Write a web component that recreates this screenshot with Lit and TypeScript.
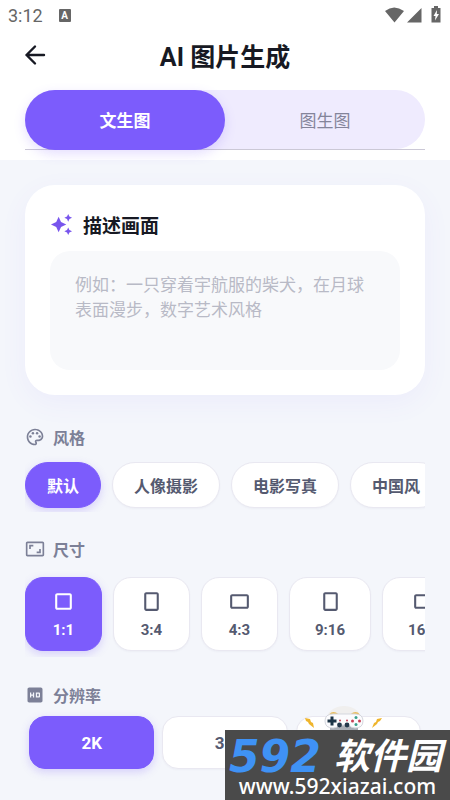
import { LitElement, html, css, svg } from "lit";
import { customElement, state } from "lit/decorators.js";

const SQUARE = "M18 4H6c-1.100 0-2 .9-2 2v12c0 1.100.9 2 2 2h12c1.100 0 2-.9 2-2V6c0-1.100-.9-2-2-2zm0 14H6V6h12v12z";
const PORTRAIT = "M17 3H7c-1.100 0-2 .9-2 2v14c0 1.100.9 2 2 2h10c1.100 0 2-.9 2-2V5c0-1.100-.9-2-2-2zm0 16H7V5h10v14z";
const LANDSCAPE = "M19 5H5c-1.100 0-2 .9-2 2v10c0 1.100.9 2 2 2h14c1.100 0 2-.9 2-2V7c0-1.100-.9-2-2-2zm0 12H5V7h14v10z";
const SIZES = [
  { label: "1:1", icon: SQUARE },
  { label: "3:4", icon: PORTRAIT },
  { label: "4:3", icon: LANDSCAPE },
  { label: "9:16", icon: PORTRAIT },
  { label: "16:9", icon: LANDSCAPE },
];
const STYLES = ["默认", "人像摄影", "电影写真", "中国风"];
const RESOLUTIONS = ["2K", "3K", "4K"];

const palette = svg`<path d="M12 22C6.490 22 2 17.510 2 12S6.490 2 12 2s10 4.040 10 9c0 3.310-2.690 6-6 6h-1.770c-.28 0-.5.22-.5.5 0 .12.050.23.130.33.410.47.640 1.060.640 1.670 0 1.380-1.120 2.500-2.500 2.500zm0-18c-4.410 0-8 3.590-8 8s3.590 8 8 8c.28 0 .5-.22.5-.5 0-.16-.08-.28-.14-.35-.41-.46-.63-1.050-.63-1.650 0-1.380 1.120-2.500 2.500-2.500H16c2.210 0 4-1.790 4-4 0-3.860-3.590-7-8-7z"/><circle cx="6.5" cy="11.5" r="1.5"/><circle cx="9.5" cy="7.5" r="1.5"/><circle cx="14.5" cy="7.5" r="1.5"/><circle cx="17.5" cy="11.5" r="1.5"/>`;
const aspect = svg`<path d="M19 12h-2v3h-3v2h5v-5zM7 9h3V7H5v5h2V9zm14-6H3c-1.100 0-2 .9-2 2v14c0 1.100.9 2 2 2h18c1.100 0 2-.9 2-2V5c0-1.100-.9-2-2-2zm0 16H3V5h18v14z"/>`;
const hd = svg`<path d="M19 3H5c-1.110 0-2 .9-2 2v14c0 1.100.89 2 2 2h14c1.100 0 2-.9 2-2V5c0-1.100-.9-2-2-2zm-8 12H9.500v-2h-2v2H6V9h1.500v2.500h2V9H11v6zm2-6h4c.55 0 1 .45 1 1v4c0 .55-.45 1-1 1h-4V9zm1.500 4.500h2v-3h-2v3z"/>`;

@customElement("app-root")
export class AppRoot extends LitElement {
  @state() private tab = 0;
  @state() private look = 0;
  @state() private size = 0;
  @state() private resolution = 0;

  static styles = css`
    :host {
      display: block;
      position: relative;
      min-height: 100vh;
      overflow: hidden;
      background: #f4f6fb;
      color: #171923;
      font-family: Roboto, "Noto Sans CJK SC", sans-serif;
    }
    * { box-sizing: border-box; }
    button {
      margin: 0;
      padding: 0;
      border: 0;
      background: none;
      font: inherit;
      color: inherit;
      cursor: pointer;
    }
    svg { display: block; fill: currentColor; flex: none; }
    .top { background: #fff; padding-bottom: 10px; }
    .status {
      display: flex;
      align-items: center;
      height: 30px;
      padding: 0 8px;
      color: #666;
      font-size: 18px;
    }
    .badge {
      margin-left: 16px;
      width: 12px;
      height: 13px;
      border-radius: 1px;
      background: #666;
      color: #fff;
      font-size: 10px;
      font-weight: 700;
      line-height: 13px;
      text-align: center;
    }
    .signals { margin-left: auto; }
    .bar {
      display: grid;
      grid-template-columns: 28px 1fr 28px;
      align-items: center;
      height: 50px;
      padding: 0 21px;
    }
    .bar h1 {
      margin: 0;
      text-align: center;
      font-size: 25px;
      font-weight: 700;
    }
    .back { width: 28px; height: 28px; }
    .tabs {
      margin: 10px 25px 0;
      height: 60px;
      border-bottom: 1px solid #cbc8d6;
    }
    .track {
      display: flex;
      height: 59px;
      border-radius: 30px;
      background: #efebfe;
    }
    .tab {
      flex: 1;
      height: 60px;
      padding-bottom: 2px;
      border-radius: 30px;
      font-size: 17px;
      color: #84849a;
    }
    .tab.on {
      background: #7c5cfc;
      color: #fff;
      font-weight: 700;
      box-shadow: 0 4px 12px rgba(124, 92, 252, 0.2);
    }
    main { padding: 25px 25px 31px; }
    .card {
      padding: 25px;
      border-radius: 30px;
      background: #fff;
      box-shadow: 0 8px 28px rgba(124, 92, 252, 0.06);
    }
    .card label {
      display: flex;
      align-items: center;
      gap: 10px;
      height: 28px;
      margin-bottom: 13px;
      font-size: 19px;
      font-weight: 700;
    }
    .spark { color: #7855ed; }
    textarea {
      display: block;
      width: 100%;
      height: 119px;
      padding: 20px 25px;
      border: 0;
      outline: 0;
      resize: none;
      border-radius: 20px;
      background: #f8f9fb;
      color: #171923;
      font: 400 17px/25px "Noto Sans CJK SC", sans-serif;
    }
    textarea::placeholder { color: #b8bac6; opacity: 1; }
    h2 {
      display: flex;
      align-items: center;
      gap: 8px;
      height: 24px;
      margin: 0;
      color: #7c8097;
      font-size: 16px;
      font-weight: 700;
    }
    .styles-block { margin-top: 30px; }
    .sizes-block { margin-top: 25px; }
    .resolution-block { margin-top: 26px; }
    .row {
      display: flex;
      gap: 11px;
      overflow-x: auto;
      scrollbar-width: none;
    }
    .chips { padding: 13px 0 4px; }
    .boxes { padding: 16px 0 6px; }
    .choice {
      flex: none;
      background: #fff;
      border: 1px solid #e9e8f1;
      color: #555a70;
      font-weight: 700;
      font-size: 16px;
      box-shadow: 0 1px 2px rgba(60, 60, 100, 0.04);
    }
    .choice.on {
      background: #7c5cfc;
      border-color: #7c5cfc;
      color: #fff;
      box-shadow: 0 3px 8px rgba(124, 92, 252, 0.25);
    }
    .chip { height: 46px; padding: 0 21px; border-radius: 23px; }
    .box {
      display: flex;
      flex-direction: column;
      align-items: center;
      gap: 6px;
      min-width: 77px;
      height: 74px;
      padding: 11px 25px 0;
      border-radius: 18px;
      font-size: 15px;
      line-height: 20px;
    }
    .levels { display: flex; gap: 8px; padding: 9px 4px 0; }
    .level {
      flex: 1;
      height: 53px;
      border-radius: 16px;
      font-size: 17px;
    }
    .mark {
      position: absolute;
      right: 0;
      bottom: 0;
      width: 225px;
      height: 70px;
      display: flex;
      flex-direction: column;
      align-items: center;
      background: #4a4a4a;
      color: #fff;
    }
    .name {
      display: flex;
      align-items: center;
      justify-content: space-between;
      width: 100%;
      height: 45px;
      padding: 8px 8px 0 4px;
      font: italic 700 36px/36px "Liberation Sans", "Noto Sans CJK SC", sans-serif;
      white-space: nowrap;
    }
    .num {
      color: #3f92f5;
      font: italic 700 44px/36px "DejaVu Sans", sans-serif;
    }
    .site {
      color: #fff;
      text-decoration: none;
      font: 500 21px/22px "Noto Sans", sans-serif;
    }
    .pad {
      position: absolute;
      right: 64px;
      bottom: 70px;
    }
  `;

  render() {
    return html`
      <header class="top">
        <div class="status">
          <span>3:12</span><span class="badge">A</span>
          <svg class="signals" width="60" height="20" viewBox="0 0 60 20">
            <path d="M3 6Q12-1 22 6L12.500 17.500z M25 17.500L39.500 3V17.500z" />
            <path d="M52 1h4v2h2.500v14.500h-9V3H52z" />
            <path d="M55 5l-3.500 6h2l-.5 4.500 4-6.500h-2.200z" fill="#fff" />
          </svg>
        </div>
        <div class="bar">
          <button class="back" aria-label="返回">
            <svg width="28" height="28" viewBox="0 0 28 28">
              <path d="M23 14H5.500M14 5.500L5.500 14l8.500 8.500" fill="none" stroke="currentColor" stroke-width="2.400" stroke-linecap="round" stroke-linejoin="round" />
            </svg>
          </button>
          <h1>AI 图片生成</h1>
        </div>
        <nav class="tabs"><div class="track">
          ${["文生图", "图生图"].map((t, i) => html`<button class="tab ${this.tab === i ? "on" : ""}" @click=${() => (this.tab = i)}>${t}</button>`)}
        </div></nav>
      </header>
      <main>
        <section class="card">
          <label for="prompt">
            <svg class="spark" width="23" height="23" viewBox="0 0 24 24">
              <path d="M19 9l1.250-2.750L23 5l-2.750-1.250L19 1l-1.250 2.750L15 5l2.750 1.250L19 9zm-7.500.5L9 4 6.500 9.500 1 12l5.500 2.500L9 20l2.500-5.500L17 12l-5.500-2.500zM19 15l-1.250 2.750L15 19l2.750 1.250L19 23l1.250-2.750L23 19l-2.750-1.250L19 15z" />
            </svg>
            描述画面
          </label>
          <textarea id="prompt" placeholder="例如：一只穿着宇航服的柴犬，在月球表面漫步，数字艺术风格"></textarea>
        </section>

        <section class="styles-block">
          <h2><svg width="20" height="20" viewBox="0 0 24 24">${palette}</svg>风格</h2>
          <div class="row chips">
            ${STYLES.map((s, i) => html`<button class="choice chip ${this.look === i ? "on" : ""}" @click=${() => (this.look = i)}>${s}</button>`)}
          </div>
        </section>

        <section class="sizes-block">
          <h2><svg width="20" height="20" viewBox="0 0 24 24">${aspect}</svg>尺寸</h2>
          <div class="row boxes">
            ${SIZES.map((s, i) => html`<button class="choice box ${this.size === i ? "on" : ""}" @click=${() => (this.size = i)}>
              <svg width="25" height="25" viewBox="0 0 24 24"><path d=${s.icon} /></svg>${s.label}
            </button>`)}
          </div>
        </section>

        <section class="resolution-block">
          <h2><svg width="20" height="20" viewBox="0 0 24 24">${hd}</svg>分辨率</h2>
          <div class="levels">
            ${RESOLUTIONS.map((r, i) => html`<button class="choice level ${this.resolution === i ? "on" : ""}" @click=${() => (this.resolution = i)}>${r}</button>`)}
          </div>
        </section>
      </main>

      <svg class="pad" width="84" height="24" viewBox="0 0 84 24" aria-hidden="true">
        <ellipse cx="42" cy="13" rx="17" ry="13" fill="#f0efee" />
        <path d="M28 9q3-4 8 0M49 9q5-4 8 0" fill="none" stroke="#e9bd5c" stroke-width="2" />
        <path d="M28 22q14-6 28 0v2H28z" fill="#a9adb5" />
        <path d="M31 8H53q8 0 8 7t-8 7q-4 0-6-3H37q-2 3-6 3-8 0-8-7t8-7z" fill="#fbfbfd" stroke="#d5d7de" />
        <path d="M28.500 10.500h3v3h3v3h-3v3h-3v-3h-3v-3h3z" fill="#1d3547" />
        <circle cx="37.500" cy="19" r="2.400" fill="#24384b" /><circle cx="45" cy="19" r="2.400" fill="#24384b" />
        <circle cx="38" cy="14.500" r="1" fill="#c54158" /><circle cx="45" cy="14.500" r="1" fill="#c54158" />
        <circle cx="54" cy="11.500" r="1.500" fill="#3aa08c" /><circle cx="54" cy="18.500" r="1.500" fill="#3aa08c" />
        <circle cx="50.500" cy="15" r="1.500" fill="#c93f55" /><circle cx="57.500" cy="15" r="1.500" fill="#c93f55" />
        <path d="M3 12l5 1 1 3 2 1 1 5-5-4-1-2-2-1z M80 12l-5 1-1 3-2 1-2 5 5-4 1-2 2-1z" fill="#efb52c" />
      </svg>
      <aside class="mark">
        <div class="name"><span class="num">592</span><span>软件园</span></div>
        <a class="site" href="http://www.592xiazai.com">www.592xiazai.com</a>
      </aside>
    `;
  }
}
